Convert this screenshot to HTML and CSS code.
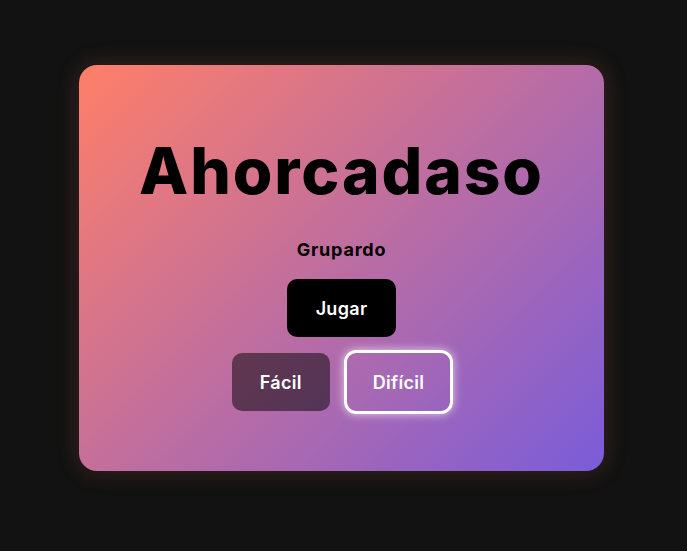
FILE: index.html
```html
<!DOCTYPE html>
<html lang="es">
<head>
<meta charset="utf-8">
<title>Ahorcadaso</title>
<link rel="stylesheet" href="styles.css">
</head>
<body>
<main class="card">
  <h1 class="title">Ahorcadaso</h1>
  <p class="group">Grupardo</p>
  <button class="btn btn-play">Jugar</button>
  <div class="levels">
    <button class="btn btn-level">Fácil</button>
    <button class="btn btn-level is-active">Difícil</button>
  </div>
</main>
</body>
</html>
```
FILE: styles.css
```css
html, body {
  margin: 0;
  padding: 0;
  background: #121212;
  height: 100%;
}
body {
  font-family: "Inter", "Lato", "DejaVu Sans", sans-serif;
  overflow: hidden;
}
.card {
  box-sizing: border-box;
  width: 525px;
  height: 406px;
  margin: 65px 0 0 79px;
  padding-top: 74px;
  border-radius: 18px;
  background: linear-gradient(135deg, #ff7f68 0%, #7a5cda 100%);
  box-shadow: 0 0 24px rgba(255, 126, 95, 0.18);
  display: flex;
  flex-direction: column;
  align-items: center;
}
.title {
  margin: 0 0 38px;
  font-size: 64px;
  line-height: 64px;
  font-weight: 800;
  color: #000;
  letter-spacing: 1.9px;
}
.group {
  margin: 0 0 20px;
  font-size: 18px;
  line-height: 18px;
  font-weight: 700;
  color: #000;
  letter-spacing: 0.8px;
}
.btn {
  font-family: inherit;
  font-size: 18px;
  font-weight: 600;
  color: #fff;
  height: 58px;
  padding: 0 28px;
  border: none;
  border-radius: 10px;
  cursor: pointer;
  letter-spacing: 0.3px;
}
.btn-play {
  background: #000;
  margin-bottom: 13px;
  padding: 0 29px;
}
.levels {
  display: flex;
  align-items: center;
  gap: 14px;
  margin-left: 2px;
}
.btn-level {
  background: rgba(0, 0, 0, 0.5);
}
.btn-level.is-active {
  background: transparent;
  height: 64px;
  padding: 0 26px;
  border: 3px solid #fff;
  border-radius: 12px;
  box-shadow: 0 0 10px rgba(255, 255, 255, 0.7);
}
```
